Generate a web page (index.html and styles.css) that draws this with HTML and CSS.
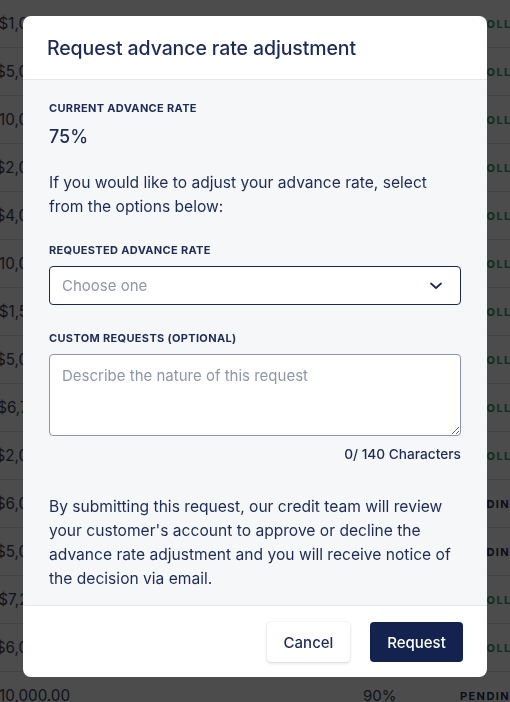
FILE: index.html
```html
<!DOCTYPE html>
<html lang="en">
<head>
<meta charset="utf-8">
<title>Request advance rate adjustment</title>
<link rel="stylesheet" href="styles.css">
</head>
<body>
<div class="page">
  <div class="table">
    <div class="row"><span class="amt">$1,000.00</span><span class="rate"></span><span class="status ok">COLLECTED</span></div>
    <div class="row"><span class="amt">$5,000.00</span><span class="rate"></span><span class="status ok">COLLECTED</span></div>
    <div class="row"><span class="amt">$10,000.00</span><span class="rate"></span><span class="status ok">COLLECTED</span></div>
    <div class="row"><span class="amt">$2,000.00</span><span class="rate"></span><span class="status ok">COLLECTED</span></div>
    <div class="row"><span class="amt">$4,000.00</span><span class="rate"></span><span class="status ok">COLLECTED</span></div>
    <div class="row"><span class="amt">$10,000.00</span><span class="rate"></span><span class="status ok">COLLECTED</span></div>
    <div class="row"><span class="amt">$1,500.00</span><span class="rate"></span><span class="status ok">COLLECTED</span></div>
    <div class="row"><span class="amt">$5,000.00</span><span class="rate"></span><span class="status ok">COLLECTED</span></div>
    <div class="row"><span class="amt">$6,750.00</span><span class="rate"></span><span class="status ok">COLLECTED</span></div>
    <div class="row"><span class="amt">$2,000.00</span><span class="rate"></span><span class="status ok">COLLECTED</span></div>
    <div class="row"><span class="amt">$6,000.00</span><span class="rate"></span><span class="status pend">PENDING</span></div>
    <div class="row"><span class="amt">$5,000.00</span><span class="rate"></span><span class="status pend">PENDING</span></div>
    <div class="row"><span class="amt">$7,250.00</span><span class="rate"></span><span class="status ok">COLLECTED</span></div>
    <div class="row"><span class="amt">$6,000.00</span><span class="rate"></span><span class="status ok">COLLECTED</span></div>
    <div class="row"><span class="amt">$10,000.00</span><span class="rate">90%</span><span class="status pend">PENDING</span></div>
  </div>
</div>
<div class="overlay"></div>
<div class="modal" role="dialog">
  <div class="modal-header">
    <h1 class="title">Request advance rate adjustment</h1>
  </div>
  <div class="modal-body">
    <div class="label">Current advance rate</div>
    <div class="current">75%</div>
    <p class="text intro">If you would like to adjust your advance rate, select from the options below:</p>
    <div class="label label-req">Requested advance rate</div>
    <div class="select">
      <span class="placeholder">Choose one</span>
      <svg class="chev" width="12" height="8" viewBox="0 0 12 8"><path d="M1 1.5 L6 6 L11 1.5" fill="none" stroke="#1b2a55" stroke-width="1.7" stroke-linecap="round" stroke-linejoin="round"/></svg>
    </div>
    <div class="label label-custom">Custom requests (optional)</div>
    <textarea class="area" placeholder="Describe the nature of this request"></textarea>
    <div class="counter">0/ 140 Characters</div>
    <p class="text notice">By submitting this request, our credit team will review your customer's account to approve or decline the advance rate adjustment and you will receive notice of the decision via email.</p>
  </div>
  <div class="modal-footer">
    <button class="btn btn-cancel">Cancel</button>
    <button class="btn btn-primary">Request</button>
  </div>
</div>
</body>
</html>
```
FILE: styles.css
```css
* { box-sizing: border-box; }
html, body { margin: 0; padding: 0; }
body {
  width: 510px;
  height: 702px;
  overflow: hidden;
  font-family: Inter, "Liberation Sans", sans-serif;
  background: #ffffff;
}
.page { width: 510px; overflow: hidden; }
.table { margin-left: -32px; }
.row {
  display: grid;
  grid-template-columns: 102px 293px 97px 80px;
  align-items: center;
  height: 48px;
  border-bottom: 1px solid #dcdcdc;
  font-size: 15.2px;
  color: #3b4058;
  white-space: nowrap;
}
.row .amt { text-align: right; grid-column: 1; }
.row .rate { grid-column: 3; text-align: left; color: #3b4058; font-size: 15px; }
.row .status { grid-column: 4; font-size: 11px; font-weight: 700; letter-spacing: 1.4px; }
.row .status.ok { color: #2f9c5c; padding-left: 17px; }
.row .status.pend { color: #2a3150; }

.overlay {
  position: fixed;
  inset: 0;
  background: rgba(0, 0, 0, 0.7);
}

.modal {
  position: fixed;
  left: 23px;
  top: 16px;
  width: 464px;
  height: 661px;
  background: #ffffff;
  border-radius: 8px;
  overflow: hidden;
  display: flex;
  flex-direction: column;
  color: #1d2b57;
}
.modal-header {
  height: 64px;
  border-bottom: 1px solid #e6e8ee;
  padding: 0 24px;
  display: flex;
  align-items: center;
}
.title {
  margin: 0;
  font-size: 19.5px;
  font-weight: 500;
  letter-spacing: -0.1px;
  color: #1d2b57;
}
.modal-body {
  flex: 1;
  background: #f6f7f9;
  padding: 20px 26px 0 26px;
  border-bottom: 1px solid #e6e8ee;
}
.label {
  font-size: 11px;
  line-height: 16px;
  font-weight: 700;
  text-transform: uppercase;
  letter-spacing: 0.33px;
  color: #1d2b57;
}
.current {
  margin-top: 9px;
  font-size: 18px;
  line-height: 24px;
  font-weight: 500;
}
.text {
  margin: 0;
  font-size: 15.6px;
  line-height: 24px;
  color: #1d2b57;
}
.intro { margin-top: 22px; }
.label-req { margin-top: 23px; }
.select {
  margin-top: 8px;
  height: 39px;
  width: 412px;
  border: 1.5px solid #1b2a55;
  border-radius: 4px;
  background: #ffffff;
  display: flex;
  align-items: center;
  justify-content: space-between;
  padding: 0 18px 0 12px;
}
.placeholder { font-size: 15px; color: #8d96ad; }
.chev { display: block; }
.label-custom { margin-top: 25px; }
.area {
  display: block;
  margin-top: 8px;
  width: 412px;
  height: 82px;
  border: 1px solid #8a93b0;
  border-radius: 4px;
  background: #ffffff;
  padding: 11px 12px;
  font-family: Inter, "Liberation Sans", sans-serif;
  font-size: 15px;
  color: #1d2b57;
  resize: vertical;
}
.area::placeholder { color: #8d96ad; }
.counter {
  margin-top: 9px;
  width: 412px;
  text-align: right;
  font-size: 13.7px;
  line-height: 18px;
  font-weight: 500;
}
.notice { margin-top: 32px; }
.modal-footer {
  height: 71px;
  display: flex;
  justify-content: flex-end;
  align-items: flex-start;
  gap: 20px;
  padding: 16px 24px 0 0;
}
.btn {
  height: 40px;
  border-radius: 4px;
  font-family: Inter, "Liberation Sans", sans-serif;
  font-size: 15px;
  font-weight: 500;
  border: none;
  cursor: pointer;
}
.btn-cancel {
  width: 83px;
  background: #ffffff;
  color: #1d2b57;
  box-shadow: 0 1px 3px rgba(16, 24, 40, 0.18), 0 0 1px rgba(16, 24, 40, 0.12);
}
.btn-primary {
  width: 93px;
  background: #13224f;
  color: #ffffff;
}
```
